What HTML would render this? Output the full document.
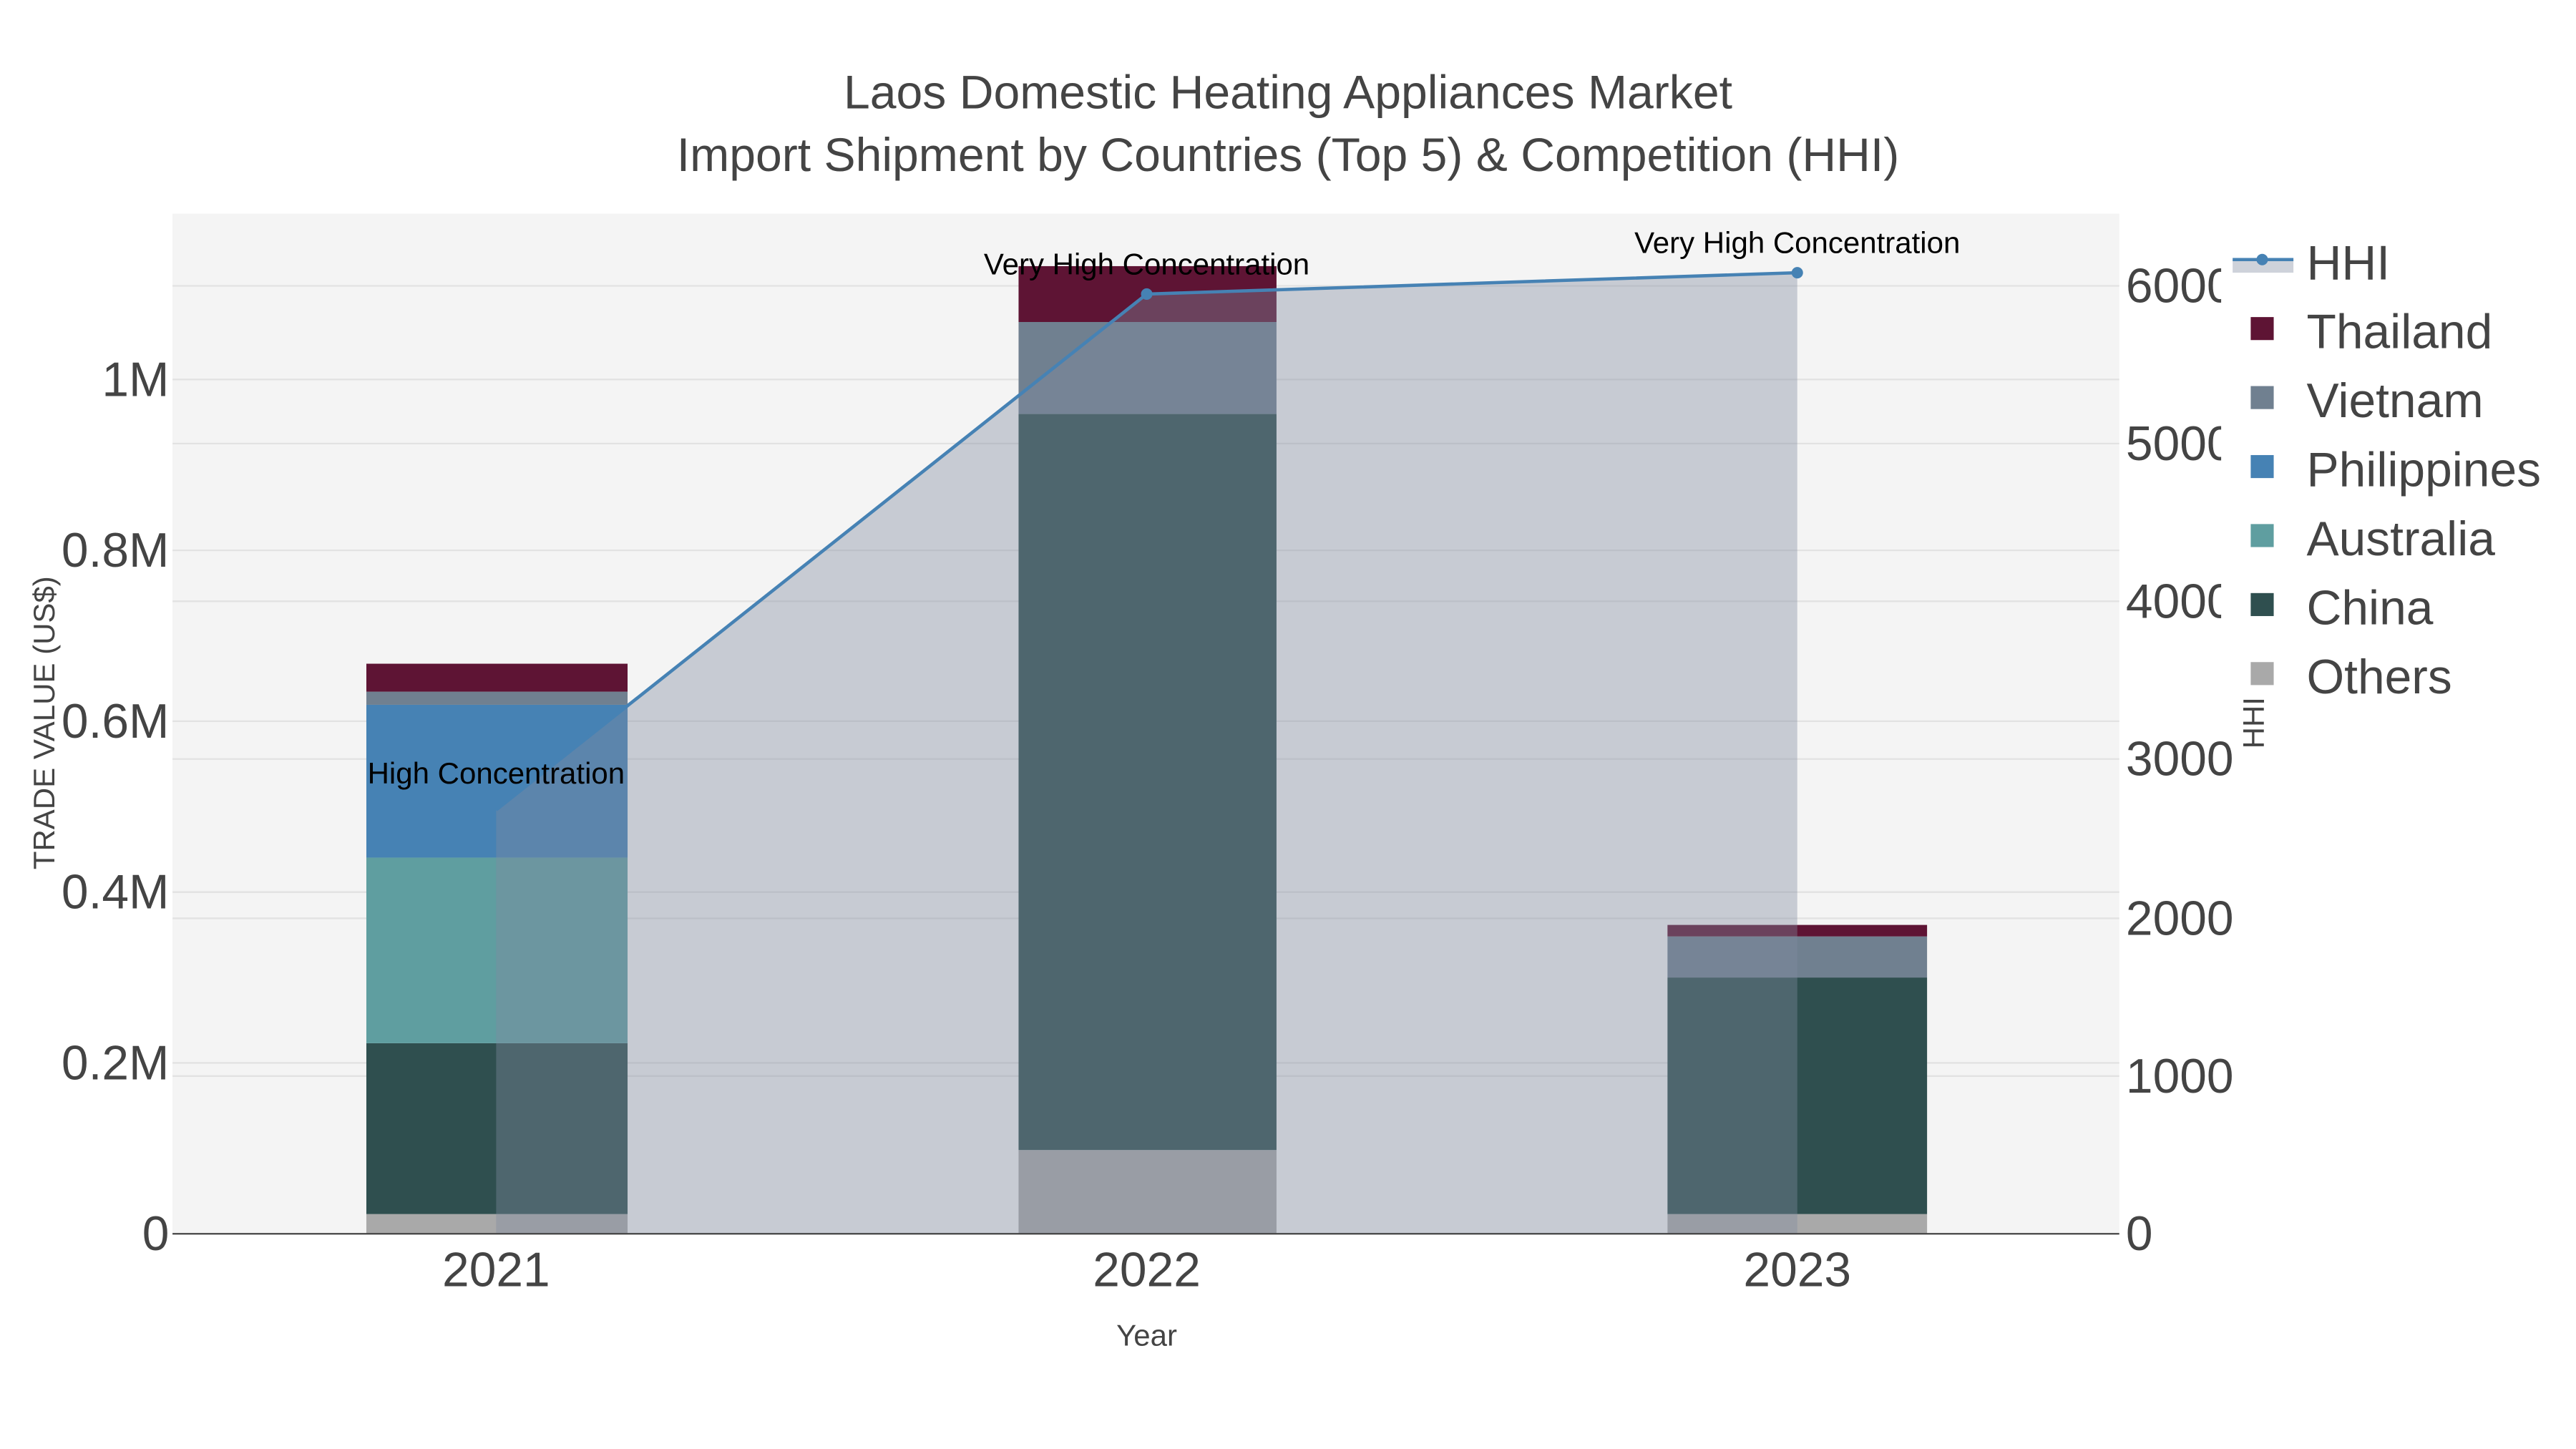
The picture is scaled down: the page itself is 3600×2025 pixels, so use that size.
<!DOCTYPE html>
<html><head><meta charset="utf-8"><style>html,body{margin:0;padding:0;background:#fff}svg{display:block}text{font-family:"Liberation Sans",sans-serif}</style></head>
<body>
<svg width="3600" height="2025" viewBox="0 0 1568 882" xmlns="http://www.w3.org/2000/svg">
<rect x="0" y="0" width="1568" height="882" fill="#fff"/>
<rect x="105" y="130" width="1185" height="621" fill="#f4f4f4"/>
<g stroke="#e2e2e2" stroke-width="1">
<line x1="105" x2="1290" y1="647" y2="647"/><line x1="105" x2="1290" y1="543" y2="543"/>
<line x1="105" x2="1290" y1="439" y2="439"/><line x1="105" x2="1290" y1="335" y2="335"/>
<line x1="105" x2="1290" y1="231" y2="231"/>
<line x1="105" x2="1290" y1="655" y2="655"/><line x1="105" x2="1290" y1="559" y2="559"/>
<line x1="105" x2="1290" y1="462" y2="462"/><line x1="105" x2="1290" y1="366" y2="366"/>
<line x1="105" x2="1290" y1="270" y2="270"/><line x1="105" x2="1290" y1="174" y2="174"/>
</g>
<rect x="223" y="739" width="159" height="12" fill="#a9a9a9"/>
<rect x="223" y="635" width="159" height="104" fill="#2f4f4f"/>
<rect x="223" y="522" width="159" height="113" fill="#5f9ea0"/>
<rect x="223" y="429" width="159" height="93" fill="#4682b4"/>
<rect x="223" y="421" width="159" height="8" fill="#708090"/>
<rect x="223" y="404" width="159" height="17" fill="#5e1434"/>
<rect x="620" y="700" width="157" height="51" fill="#a9a9a9"/>
<rect x="620" y="252" width="157" height="448" fill="#2f4f4f"/>
<rect x="620" y="196" width="157" height="56" fill="#708090"/>
<rect x="620" y="162" width="157" height="34" fill="#5e1434"/>
<rect x="1015" y="739" width="158" height="12" fill="#a9a9a9"/>
<rect x="1015" y="595" width="158" height="144" fill="#2f4f4f"/>
<rect x="1015" y="570" width="158" height="25" fill="#708090"/>
<rect x="1015" y="563" width="158" height="7" fill="#5e1434"/>
<polygon points="302,751 302,493 698,179 1094,166 1094,751" fill="rgb(130,140,159)" fill-opacity="0.39"/>
<polyline points="302,493 698,179 1094,166" fill="none" stroke="#4682b4" stroke-width="2"/>
<circle cx="698" cy="179" r="3.5" fill="#4682b4"/><circle cx="1094" cy="166" r="3.5" fill="#4682b4"/>
<line x1="105" x2="1290" y1="751" y2="751" stroke="#444" stroke-width="1"/>
<g font-size="18.3" fill="#000" text-anchor="middle">
<text x="302" y="477">High Concentration</text>
<text x="698" y="167">Very High Concentration</text>
<text x="1094" y="154">Very High Concentration</text>
</g>
<g font-size="28.8" fill="#444" text-anchor="middle">
<text x="784" y="66">Laos Domestic Heating Appliances Market</text>
<text x="784" y="104">Import Shipment by Countries (Top 5) &amp; Competition (HHI)</text>
</g>
<g font-size="29.5" fill="#444" text-anchor="middle">
<text x="302" y="783">2021</text><text x="698" y="783">2022</text><text x="1094" y="783">2023</text>
</g>
<g font-size="29.5" fill="#444" text-anchor="end">
<text x="103" y="761">0</text><text x="103" y="657">0.2M</text><text x="103" y="553">0.4M</text>
<text x="103" y="449">0.6M</text><text x="103" y="345">0.8M</text><text x="103" y="241">1M</text>
</g>
<g font-size="29.5" fill="#444">
<text x="1294" y="761">0</text><text x="1294" y="665">1000</text><text x="1294" y="569">2000</text>
<text x="1294" y="472">3000</text><text x="1294" y="376">4000</text><text x="1294" y="280">5000</text>
<text x="1294" y="184">6000</text>
</g>
<text x="698" y="819" font-size="18.3" fill="#444" text-anchor="middle">Year</text>
<text transform="translate(33,440) rotate(-90)" font-size="18.3" fill="#444" text-anchor="middle">TRADE VALUE (US$)</text>
<rect x="1352" y="140" width="216" height="290" fill="#fff"/>
<text transform="translate(1378,440) rotate(-90)" font-size="18.3" fill="#444" text-anchor="middle">HHI</text>
<rect x="1359" y="158" width="37" height="8" fill="rgb(130,140,159)" fill-opacity="0.39"/>
<line x1="1359" x2="1396" y1="158" y2="158" stroke="#4682b4" stroke-width="2"/>
<circle cx="1377" cy="158" r="3.5" fill="#4682b4"/>
<rect x="1370" y="193" width="14" height="14" fill="#5e1434"/>
<rect x="1370" y="235" width="14" height="14" fill="#708090"/>
<rect x="1370" y="277" width="14" height="14" fill="#4682b4"/>
<rect x="1370" y="319" width="14" height="14" fill="#5f9ea0"/>
<rect x="1370" y="361" width="14" height="14" fill="#2f4f4f"/>
<rect x="1370" y="403" width="14" height="14" fill="#a9a9a9"/>
<g font-size="29.5" fill="#444">
<text x="1404" y="170">HHI</text><text x="1404" y="212">Thailand</text><text x="1404" y="254">Vietnam</text>
<text x="1404" y="296">Philippines</text><text x="1404" y="338">Australia</text><text x="1404" y="380">China</text>
<text x="1404" y="422">Others</text>
</g>
</svg>
</body></html>
